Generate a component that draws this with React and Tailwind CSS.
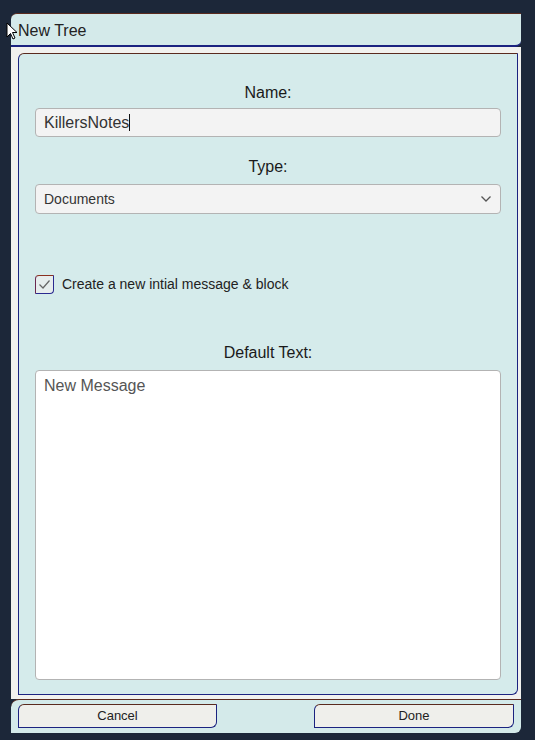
export default function App() {
    const font = { fontFamily: '"Liberation Sans", Arial, sans-serif' };

    return (
        <div className="relative w-[535px] h-[740px] bg-[#1c2739] pt-[13px] pl-[11px]" style={font}>
            {/* Window */}
            <div className="w-[510px] flex flex-col">
                {/* Title bar */}
                <div className="h-[34px] bg-[#d4eaea] border-t border-[#5a2a1e] border-b-2 border-b-[#1b2380] rounded-tl-[6px] rounded-br-[6px] flex items-center pl-[7px] pt-[2px]">
                    <span className="text-[16px] text-[#222]">New Tree</span>
                </div>

                {/* Body */}
                <div className="bg-[#f1f1ee] pt-[6px] pl-[7px] pr-[3px] pb-[4px]">
                    <div className="h-[642px] bg-[#d5ebeb] border border-t-[#5a2a1e] border-l-[#1b2380] border-r-[#1b2380] border-b-[#1b2380] rounded-tl-[6px] rounded-br-[6px] px-[16px] pt-[29px] flex flex-col">
                        <div className="text-center text-[16px] leading-[19px] text-[#1a1a1a]">Name:</div>
                        <div className="mt-[6px] h-[29px] bg-[#f3f3f3] border border-[#b3b3b3] rounded-[4px] flex items-center pl-[8px]">
                            <span className="text-[16px] text-[#333]">KillersNotes</span>
                            <span className="w-px h-[17px] bg-[#111]" />
                        </div>

                        <div className="mt-[20px] text-center text-[16px] leading-[19px] text-[#1a1a1a]">Type:</div>
                        <div className="mt-[8px] h-[30px] bg-[#f3f3f3] border border-[#b3b3b3] rounded-[4px] flex items-center justify-between pl-[8px] pr-[8px]">
                            <span className="text-[14px] text-[#333]">Documents</span>
                            <svg width="12" height="8" viewBox="0 0 12 8" fill="none" stroke="#555" strokeWidth="1.3">
                                <path d="M1.5 1.5 L6 6 L10.5 1.5" />
                            </svg>
                        </div>

                        <div className="mt-[60px] flex items-center gap-[8px]">
                            <div className="w-[19px] h-[19px] bg-[#e6eded] border border-t-[#8a3020] border-l-[#6a2850] border-r-[#2a2a90] border-b-[#2a2a90] rounded-tl-[4px] rounded-br-[4px] flex items-center justify-center">
                                <svg width="13" height="11" viewBox="0 0 13 11" fill="none" stroke="#666" strokeWidth="1.2">
                                    <path d="M1.5 5.5 L5 9 L11.5 1.5" />
                                </svg>
                            </div>
                            <span className="text-[14px] text-[#222]">Create a new intial message &amp; block</span>
                        </div>

                        <div className="mt-[48px] text-center text-[16px] leading-[19px] text-[#1a1a1a]">Default Text:</div>
                        <div className="mt-[8px] h-[310px] bg-white border border-[#b3b3b3] rounded-[4px] pl-[8px] pt-[3px]">
                            <span className="text-[16px] text-[#555]">New Message</span>
                        </div>
                    </div>
                </div>

                {/* Footer */}
                <div className="h-[34px] bg-[#d4eaea] border-t border-[#5a2a1e] rounded-tl-[8px] rounded-br-[6px] flex items-start justify-between pl-[7px] pr-[7px] pt-[4px]">
                    <button className="w-[199px] h-[24px] bg-[#efefeb] border border-t-[#5a2a1e] border-l-[#1b2380] border-r-[#1b2380] border-b-[#1b2380] rounded-tl-[6px] rounded-br-[6px] text-[13px] text-[#222]">
                        Cancel
                    </button>
                    <button className="w-[200px] h-[24px] bg-[#efefeb] border border-t-[#5a2a1e] border-l-[#1b2380] border-r-[#1b2380] border-b-[#1b2380] rounded-tl-[6px] rounded-br-[6px] text-[13px] text-[#222]">
                        Done
                    </button>
                </div>
            </div>

            {/* Mouse cursor */}
            <svg className="absolute left-[6px] top-[22px]" width="14" height="20" viewBox="0 0 14 20">
                <path d="M1 1 L1 15 L4.5 11.5 L7 17 L9 16 L6.5 10.5 L11 10.5 Z" fill="white" stroke="black" strokeWidth="1" strokeLinejoin="round" />
            </svg>
        </div>
    );
}
